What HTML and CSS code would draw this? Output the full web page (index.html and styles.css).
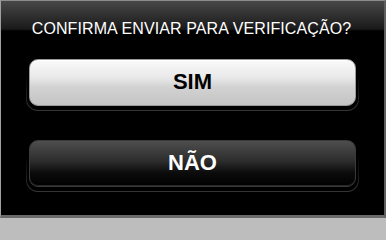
FILE: index.html
```html
<!DOCTYPE html>
<html lang="pt">
<head>
<meta charset="utf-8">
<title>Confirmação</title>
<link rel="stylesheet" href="styles.css">
</head>
<body>
<div class="dialog">
  <div class="title">CONFIRMA ENVIAR PARA VERIFICAÇÃO?</div>
  <div class="actions">
    <div class="well"><div class="well-inner"><button class="btn btn-light">SIM</button></div></div>
    <div class="well"><div class="well-inner"><button class="btn btn-dark">NÃO</button></div></div>
  </div>
</div>
</body>
</html>
```
FILE: styles.css
```css
html, body {
  margin: 0;
  padding: 0;
  background: #bdbdbd;
}
body {
  width: 386px;
  height: 218px;
  overflow: hidden;
  font-family: "Liberation Sans", Arial, sans-serif;
}
.dialog {
  box-sizing: border-box;
  width: 386px;
  height: 218px;
  border-top: 1px solid #8c8c8c;
  border-left: 1px solid #a0a0a0;
  border-right: 2px solid #5e5e5e;
  border-bottom: 3px solid #6a6a6a;
  background: linear-gradient(to bottom, #484848 0, #2a2a2a 18px, #1a1a1a 28px, #000 30px, #000 100%);
  padding: 18px 25px 0 25px;
  display: flex;
  flex-direction: column;
}
.title {
  color: #fff;
  font-size: 16px;
  line-height: 20px;
  text-align: center;
  white-space: nowrap;
  margin-left: -2px;
  letter-spacing: 0.1px;
}
.actions {
  display: flex;
  flex-direction: column;
  gap: 26px;
  margin-top: 17px;
}
.well {
  padding: 1px;
  border-radius: 12px;
  background: linear-gradient(to bottom, rgba(60,60,60,0) 0, rgba(60,60,60,0) 35%, #363636 100%);
}
.well-inner {
  background: #000;
  border-radius: 11px;
  padding: 2px 2px 4px 2px;
}
.btn {
  display: flex;
  align-items: center;
  justify-content: center;
  width: 100%;
  height: 47px;
  box-sizing: border-box;
  border-radius: 9px;
  font-family: "Liberation Sans", Arial, sans-serif;
  font-weight: bold;
  font-size: 22px;
  padding: 0 0 1px 0;
  cursor: pointer;
}
.btn-light {
  color: #000;
  border: 1px solid #9a9a9a;
  background: linear-gradient(to bottom, #fafafa 0%, #e8e8e8 40%, #d2d2d2 60%, #c4c4c4 100%);
  box-shadow: inset 0 1px 0 #fff;
}
.btn-dark {
  color: #fff;
  border: 1px solid #3a3a3a;
  background: linear-gradient(to bottom, #4e4e4e 0%, #2c2c2c 45%, #0c0c0c 70%, #000 100%);
  box-shadow: inset 0 -1px 0 #262626;
}
```
